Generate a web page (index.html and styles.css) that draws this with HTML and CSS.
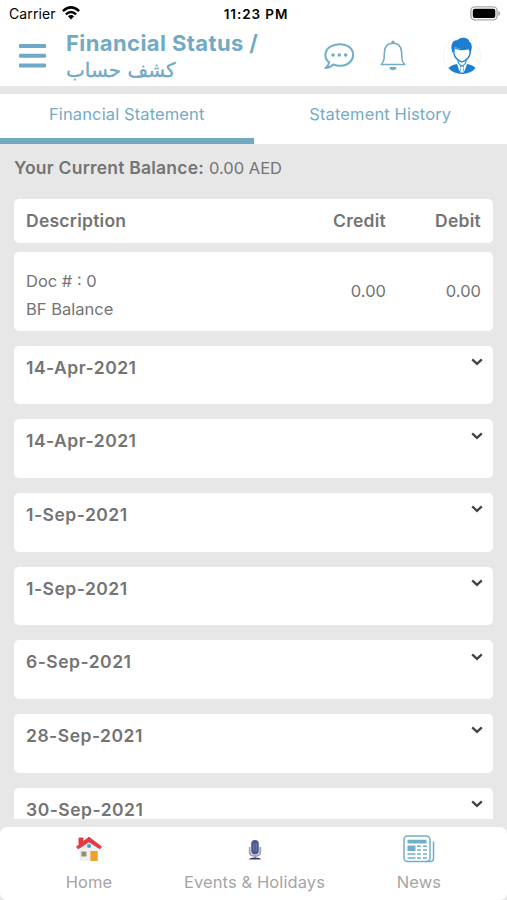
FILE: index.html
```html
<!DOCTYPE html>
<html lang="en">
<head>
<meta charset="utf-8">
<title>Financial Status</title>
<link rel="stylesheet" href="styles.css">
</head>
<body>
<div class="app">
  <div class="status">
    <div class="carrier"><span>Carrier</span>
      <svg width="18" height="14" viewBox="0 0 18 14"><g fill="none" stroke="#000" stroke-width="2.5"><path d="M.9 5.1Q9-2.4 17.1 5.1"/><path d="M3.9 8.3Q9 3.6 14.1 8.3"/></g><path d="M5.9 10.2Q9 7.7 12.1 10.2L9 13.5z"/></svg>
    </div>
    <div class="time">11:23 PM</div>
    <svg class="battery" width="31" height="15" viewBox="0 0 31 15"><rect x=".9" y=".9" width="26.2" height="13" rx="3.8" fill="#fff" stroke="#aaa" stroke-width="1.4"/><rect x="2.8" y="2.7" width="22.5" height="9.4" rx="2"/><path d="M28.3 5v5q2-.7 2-2.5t-2-2.5z" fill="#aaa"/></svg>
  </div>
  <header class="header">
    <svg class="menu" width="27" height="24" viewBox="0 0 27 24"><g fill="#6fa9c5"><rect width="27" height="4" rx="1"/><rect y="9.7" width="27" height="4" rx="1"/><rect y="19.4" width="27" height="4" rx="1"/></g></svg>
    <h1 class="title"><span class="en">Financial Status /</span><span class="ar" lang="ar" dir="rtl">كشف حساب</span></h1>
    <svg class="chat" width="31" height="28" viewBox="0 0 31 28"><path d="M5.2 19.4C-.8 14.7.7 6.2 7.4 3.1C15-.7 26.8 1.1 28.8 9.2C30.7 17.1 24 23.1 15.8 22.8C13.3 22.8 11.3 22.3 9.4 21.5C7 23.8 4.3 24.8 1.4 25Q4.6 22.5 5.2 19.4z" fill="none" stroke="#72aec9" stroke-width="2" stroke-linejoin="round"/><g fill="#72aec9"><circle cx="9" cy="12" r="1.8"/><circle cx="15.3" cy="12" r="1.8"/><circle cx="21.7" cy="12" r="1.8"/></g></svg>
    <svg class="bell" width="26" height="31" viewBox="0 0 26 31"><g fill="none" stroke="#72aec9" stroke-width="1.6" stroke-linejoin="round"><path d="M1.2 24.5Q3.6 22.5 4 19L4.5 11.5Q5.1 3.2 13 3.2T21.5 11.5L22 19Q22.4 22.5 24.8 24.5z"/></g><circle cx="13" cy="2.2" r="1.6" fill="#72aec9"/><path d="M9.3 27h7.4q-.6 3.2-3.7 3.2T9.3 27z" fill="#72aec9"/></svg>
    <svg class="avatar" width="38" height="38" viewBox="0 0 38 38"><circle cx="19" cy="19" r="18.5" fill="#fff" stroke="#f5f5f5"/><g fill="#1a7fd0"><path d="M9.4 15.5Q7.5 10 9.2 6.2Q10.5 3 14 3.2Q19-.6 24.2 1.8Q26.4 3 26.3 4.6Q30 6.7 28.3 13.5L27.5 16.5L25.8 11.5Q16 13.5 11.5 9.8L10.5 15.5z"/><path d="M5.5 31.3Q7 28.5 14 27l2.5 7.5 1.3-4.2-1-1.6h4.4l-1 1.6 1.3 4.2L24 27q7 1.5 8.5 4.3Q27 37 19 37T5.5 31.3z"/></g><path d="M11 10.5Q16 14 25.8 11.5Q28 14 27 17Q25.5 22.8 19 25Q12.5 22.8 11 17z" fill="#fff" stroke="#1a7fd0" stroke-width="1.3"/><path d="M14.5 23.5L16 27l3 2 3-2 1.5-3.5" fill="none" stroke="#1a7fd0"/><path d="M18.1 29.5h1.8l.8 6h-3.4z" fill="#fff"/></svg>
  </header>
  <nav class="tabs"><div class="tab active"><span>Financial Statement</span></div><div class="tab"><span>Statement History</span></div></nav>
  <main class="content">
    <p class="balance"><b>Your Current Balance:</b> <span>0.00 AED</span></p>
    <div class="card heads"><b class="desc">Description</b><b class="credit">Credit</b><b class="debit">Debit</b></div>
    <div class="card opening"><div class="desc">Doc # : 0<br>BF Balance</div><span class="credit">0.00</span><span class="debit">0.00</span></div>
    <div class="card entry"><b>14-Apr-2021</b><svg class="chev" viewBox="0 0 12 8"><path d="M1.2 1.3L6 5.8l4.8-4.5"/></svg></div>
    <div class="card entry"><b>14-Apr-2021</b><svg class="chev" viewBox="0 0 12 8"><path d="M1.2 1.3L6 5.8l4.8-4.5"/></svg></div>
    <div class="card entry"><b>1-Sep-2021</b><svg class="chev" viewBox="0 0 12 8"><path d="M1.2 1.3L6 5.8l4.8-4.5"/></svg></div>
    <div class="card entry"><b>1-Sep-2021</b><svg class="chev" viewBox="0 0 12 8"><path d="M1.2 1.3L6 5.8l4.8-4.5"/></svg></div>
    <div class="card entry"><b>6-Sep-2021</b><svg class="chev" viewBox="0 0 12 8"><path d="M1.2 1.3L6 5.8l4.8-4.5"/></svg></div>
    <div class="card entry"><b>28-Sep-2021</b><svg class="chev" viewBox="0 0 12 8"><path d="M1.2 1.3L6 5.8l4.8-4.5"/></svg></div>
    <div class="card entry"><b>30-Sep-2021</b><svg class="chev" viewBox="0 0 12 8"><path d="M1.2 1.3L6 5.8l4.8-4.5"/></svg></div>
  </main>
  <footer class="bottom">
    <div class="item home">
      <svg width="28" height="26" viewBox="0 0 28 26"><path d="M5 12L14 4l9 8v12.5H5z" fill="#f1f0f0"/><path d="M4 2h4v6H4zM1.5 10.8L14 1.2l12.5 9.6-1.7 2L14 5.8 3.2 12.8z" fill="#e23b43" stroke="#e23b43" stroke-linejoin="round"/><circle cx="14" cy="10" r="2" fill="#37a6cc"/><rect x="6.2" y="15.5" width="5.2" height="5" rx="1" fill="#8f9068" stroke="#c8c5b5"/><path d="M15.4 15h7.2v10h-7.2z" fill="#f0a02b"/></svg>
      <span>Home</span></div>
    <div class="item events">
      <svg width="14" height="22" viewBox="0 0 14 22"><path d="M1.7 8v4.5q0 4.5 5.3 4.5t5.3-4.5V8M7 17v3" fill="none" stroke="#a3a3b0" stroke-width="1.8"/><rect x="3.2" y="1" width="7.6" height="14.5" rx="3.8" fill="#4d5790"/><path d="M6 4v8M8.3 4v8" stroke="#7d86b7" stroke-width=".8"/><path d="M1 20.5Q1.5 18.5 7 18.5t6 2z" fill="#323b6d"/></svg>
      <span>Events &amp; Holidays</span></div>
    <div class="item news">
      <svg width="32" height="28" viewBox="0 0 32 28"><g fill="none" stroke="#72aec9" stroke-width="1.5"><rect x="1" y="1" width="26" height="25.5" rx="3.5"/><path d="M23 26.5h4.5q3 0 3-3.5V6.5"/></g><path d="M4.5 4.8h19v3.7h-19zM4.5 10.5h8v5.5h-8z" fill="#72aec9"/><path d="M14 11.2h4M20 11.2h4M14 15h4M20 15h4M4.5 19h8M14 19h4M20 19h4M4.5 23h8M14 23h4M20 23h4" stroke="#72aec9" stroke-width="1.5"/></svg>
      <span>News</span></div>
  </footer>
</div>
</body>
</html>
```
FILE: styles.css
```css
* { box-sizing: border-box; }
body { margin: 0; font-family: Inter, sans-serif; background: #e7e7e7; color: #747474; }
svg { display: block; flex: none; }
b { font-weight: 600; }
.app { width: 507px; height: 900px; overflow: hidden; display: flex; flex-direction: column; }
.status { height: 27px; flex: none; background: #fff; display: grid; grid-template-columns: 1fr auto 1fr; align-items: center; padding: 0 6px 0 9px; color: #000; font-size: 14px; }
.carrier { display: flex; align-items: center; gap: 6px; letter-spacing: .1px; }
.carrier svg { margin-top: -1px; }
.time { font-weight: 600; font-size: 13.5px; letter-spacing: .9px; margin-right: -2px; }
.battery { justify-self: end; }
.header { height: 59px; flex: none; background: #fff; display: flex; padding-left: 19px; }
.menu { margin-top: 17px; }
.title { margin: 3px 0 0 20px; width: 258px; font-size: 22px; line-height: 27px; font-weight: 700; color: #72aac5; }
.title span { display: block; width: max-content; }
.en { letter-spacing: .4px; }
.ar { font-family: "DejaVu Sans", sans-serif; font-weight: 400; font-size: 20px; line-height: 26px; -webkit-text-stroke: .35px #72aac5; }
.chat { margin-top: 16px; }
.bell { margin: 13px 0 0 25px; }
.avatar { margin: 10px 0 0 37px; }
.tabs { height: 50px; margin-top: 8px; flex: none; display: flex; background: #fff; color: #74abc7; font-size: 16.5px; letter-spacing: .12px; }
.tab { flex: 1; display: flex; justify-content: center; line-height: 40px; border-bottom: 6px solid #fff; }
.active { border-color: #72a9c1; }
.content { height: 675px; flex: none; overflow: hidden; padding: 0 14px; font-size: 16.5px; }
.balance { margin: 0; height: 54.5px; line-height: 47px; font-size: 17.5px; }
.balance b { letter-spacing: .22px; }
.balance span { font-size: 16.5px; }
.card { background: #fff; border-radius: 5px; padding: 0 12px; display: flex; }
.heads { height: 44px; align-items: center; font-size: 17.5px; letter-spacing: .25px; padding-bottom: 1px; }
.opening { height: 79px; margin: 9px 0 15px; align-items: center; padding-bottom: 1px; }
.opening .desc { line-height: 28px; padding-top: 8px; }
.desc { flex: 1; }
.credit { width: 96px; text-align: right; }
.debit { width: 95px; text-align: right; }
.entry { height: 58.7px; margin-bottom: 15px; justify-content: space-between; font-size: 17.5px; letter-spacing: .5px; line-height: 44px; padding-right: 10px; }
.chev { width: 12px; height: 8px; margin-top: 12.5px; fill: none; stroke: #444; stroke-width: 2.3; }
.bottom { height: 73px; margin-top: 8px; flex: none; background: #fff; border-radius: 7px; display: grid; grid-template-columns: 178px 153px 176px; color: #a5a5a5; font-size: 16.5px; letter-spacing: .1px; }
.item { display: flex; flex-direction: column; align-items: center; }
.item svg { height: 28px; margin-top: 8px; }
.item span { line-height: 22px; margin-top: 8px; white-space: nowrap; }
.item.events svg { height: 22px; margin: 12px 0 2px; }
```
